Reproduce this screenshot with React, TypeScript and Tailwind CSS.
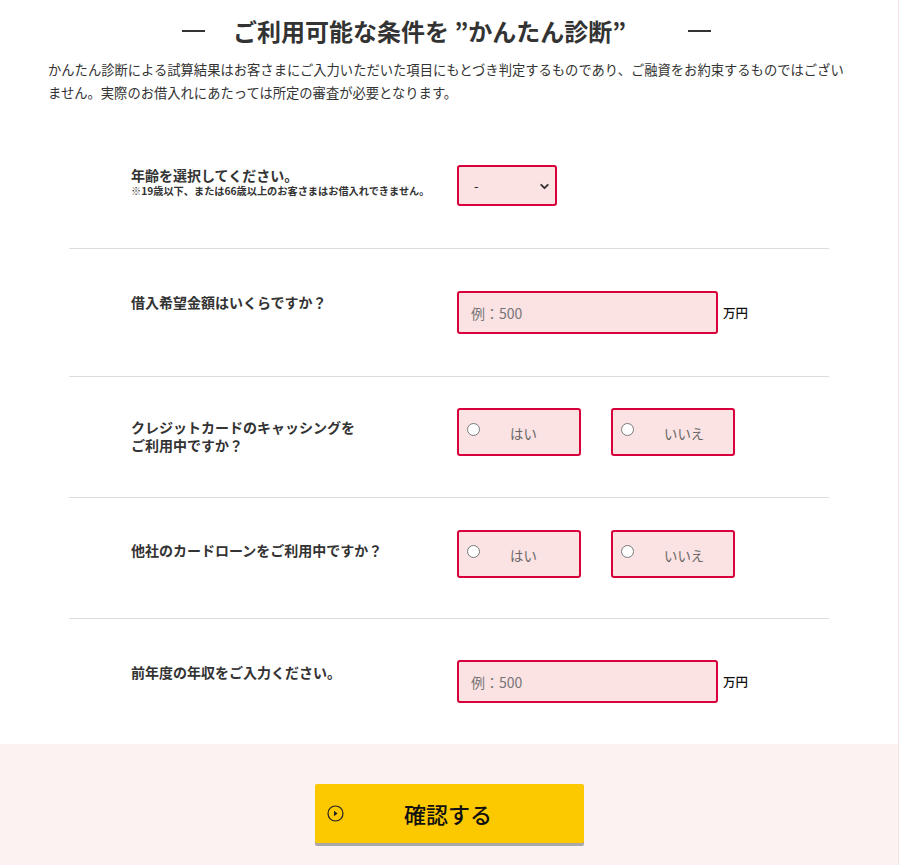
import React from 'react';
import { ChevronDown } from 'lucide-react';

const font = { fontFamily: '"Noto Sans CJK JP", "Noto Sans", sans-serif' };

const boxCls = 'border-2 border-[#d7003a] bg-[#fbe2e3] rounded-[3px]';

const YesNo: React.FC<{ name: string }> = ({ name }) => (
    <div className="flex gap-[30px]">
        {['はい', 'いいえ'].map((t) => (
            <label key={t} className={`${boxCls} relative flex w-[124px] h-[48px] items-center pl-[51px] pt-[2px]`}>
                <input type="radio" name={name} className="absolute left-[8px] top-[13px] m-0 w-[13px] h-[13px]" />
                <span className="text-[13.4px] text-[#666]">{t}</span>
            </label>
        ))}
    </div>
);

const AmountInput: React.FC = () => (
    <div className="flex items-center">
        <input
            type="text"
            placeholder="例：500"
            className={`${boxCls} w-[261px] h-[43px] px-[12px] text-[14px] text-[#333] placeholder:text-[#757575] outline-none`}
        />
        <span className="ml-[5px] pt-[2px] text-[12.5px] text-[#111] font-medium">万円</span>
    </div>
);

interface RowProps {
    label: React.ReactNode;
    labelPad: string;
    children: React.ReactNode;
}

const Row: React.FC<RowProps> = ({ label, labelPad, children }) => (
    <div className="flex">
        <div className={`w-[388px] pl-[62px] ${labelPad}`}>{label}</div>
        <div>{children}</div>
    </div>
);

export default function App() {
    return (
        <div className="w-[900px] bg-white text-[#333]" style={font}>
            <div className="w-[899px] border-r border-[#f3e1e3]">
                <h1 className="flex items-center pl-[182px] pt-[15px] text-[24px] leading-[32px] font-bold text-[#333]">
                    <span className="w-[23px] h-[2.5px] bg-[#333]" />
                    <span className="ml-[28px]">ご利用可能な条件を ”かんたん診断”</span>
                    <span className="ml-[62px] w-[23px] h-[2.5px] bg-[#333]" />
                </h1>
                <p className="px-[48px] mt-[11px] text-[13.3px] leading-[23px] text-[#333]">
                    かんたん診断による試算結果はお客さまにご入力いただいた項目にもとづき判定するものであり、ご融資をお約束するものではございません。実際のお借入れにあたっては所定の審査が必要となります。
                </p>

                <div className="w-[760px] mx-auto mt-[19px]">
                    <div className="py-[42px]">
                        <Row
                            labelPad="pt-[1px]"
                            label={
                                <>
                                    <p className="text-[14px] leading-[18px] font-bold">年齢を選択してください。</p>
                                    <p className="text-[10.2px] leading-[14px] font-bold text-[#333]">※19歳以下、または66歳以上のお客さまはお借入れできません。</p>
                                </>
                            }
                        >
                            <div className={`${boxCls} relative w-[100px] h-[41px]`}>
                                <select className="appearance-none w-full h-full bg-transparent pl-[15px] text-[13px] text-[#222] outline-none">
                                    <option>-</option>
                                </select>
                                <ChevronDown className="absolute right-[4px] top-[13px] w-[13px] h-[13px] pointer-events-none" strokeWidth={3.5} />
                            </div>
                        </Row>
                    </div>
                    <div className="border-t border-[#dcdcdc] py-[42px]">
                        <Row labelPad="pt-[2px]" label={<p className="text-[14px] leading-[18px] font-bold">借入希望金額はいくらですか？</p>}>
                            <AmountInput />
                        </Row>
                    </div>
                    <div className="border-t border-[#dcdcdc] pt-[31px] pb-[41px]">
                        <Row
                            labelPad="pt-[11px]"
                            label={
                                <p className="text-[14px] leading-[17.5px] font-bold">
                                    クレジットカードのキャッシングを
                                    <br />
                                    ご利用中ですか？
                                </p>
                            }
                        >
                            <YesNo name="cashing" />
                        </Row>
                    </div>
                    <div className="border-t border-[#dcdcdc] pt-[32px] pb-[40px]">
                        <Row labelPad="pt-[11px]" label={<p className="text-[14px] leading-[18px] font-bold">他社のカードローンをご利用中ですか？</p>}>
                            <YesNo name="loan" />
                        </Row>
                    </div>
                    <div className="border-t border-[#dcdcdc] py-[41px]">
                        <Row labelPad="pt-[3px]" label={<p className="text-[14px] leading-[18px] font-bold">前年度の年収をご入力ください。</p>}>
                            <AmountInput />
                        </Row>
                    </div>
                </div>

                <div className="bg-[#fdf2f2] pt-[40px] pb-[40px] flex justify-center">
                    <button className="relative w-[269px] h-[59px] bg-[#fcc800] rounded-[2px] shadow-[0_3px_0_#a9a9a9] flex items-center justify-center">
                        <svg className="absolute left-[12px] top-[21px]" width="17" height="17" viewBox="0 0 17 17">
                            <circle cx="8.5" cy="8.5" r="7.5" fill="none" stroke="#222" strokeWidth="1.2" />
                            <path d="M7 5.8 L10.6 8.5 L7 11.2 Z" fill="#222" />
                        </svg>
                        <span className="text-[22px] font-medium text-[#111] pr-[2px]">確認する</span>
                    </button>
                </div>
            </div>
        </div>
    );
}
